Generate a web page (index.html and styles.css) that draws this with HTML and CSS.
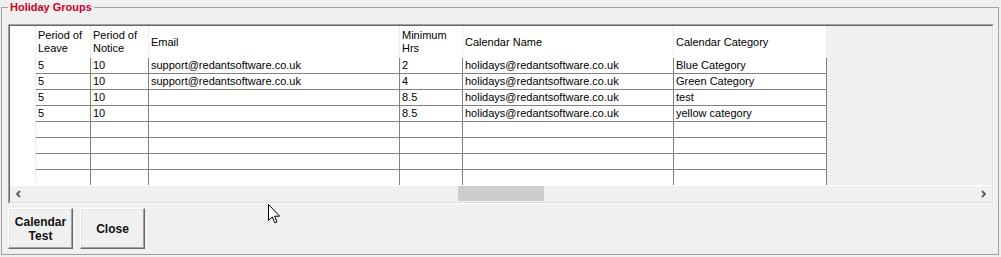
FILE: index.html
```html
<!DOCTYPE html>
<html>
<head>
<meta charset="utf-8">
<link rel="stylesheet" href="styles.css">
</head>
<body>
<fieldset class="group">
  <legend class="group-title">Holiday Groups</legend>
  <div class="grid">
    <div class="grid-inner">
      <div class="viewport">
        <div class="row hdr">
          <div class="rh"></div>
          <div class="c c1">Period of Leave</div>
          <div class="c c2">Period of Notice</div>
          <div class="c c3">Email</div>
          <div class="c c4">Minimum Hrs</div>
          <div class="c c5">Calendar Name</div>
          <div class="c c6">Calendar Category</div>
        </div>
        <div class="row">
          <div class="rh"></div>
          <div class="c c1">5</div><div class="c c2">10</div><div class="c c3">support@redantsoftware.co.uk</div><div class="c c4">2</div><div class="c c5">holidays@redantsoftware.co.uk</div><div class="c c6">Blue Category</div>
        </div>
        <div class="row">
          <div class="rh"></div>
          <div class="c c1">5</div><div class="c c2">10</div><div class="c c3">support@redantsoftware.co.uk</div><div class="c c4">4</div><div class="c c5">holidays@redantsoftware.co.uk</div><div class="c c6">Green Category</div>
        </div>
        <div class="row">
          <div class="rh"></div>
          <div class="c c1">5</div><div class="c c2">10</div><div class="c c3"></div><div class="c c4">8.5</div><div class="c c5">holidays@redantsoftware.co.uk</div><div class="c c6">test</div>
        </div>
        <div class="row">
          <div class="rh"></div>
          <div class="c c1">5</div><div class="c c2">10</div><div class="c c3"></div><div class="c c4">8.5</div><div class="c c5">holidays@redantsoftware.co.uk</div><div class="c c6">yellow category</div>
        </div>
        <div class="row">
          <div class="rh"></div>
          <div class="c c1"></div><div class="c c2"></div><div class="c c3"></div><div class="c c4"></div><div class="c c5"></div><div class="c c6"></div>
        </div>
        <div class="row">
          <div class="rh"></div>
          <div class="c c1"></div><div class="c c2"></div><div class="c c3"></div><div class="c c4"></div><div class="c c5"></div><div class="c c6"></div>
        </div>
        <div class="row">
          <div class="rh"></div>
          <div class="c c1"></div><div class="c c2"></div><div class="c c3"></div><div class="c c4"></div><div class="c c5"></div><div class="c c6"></div>
        </div>
        <div class="row">
          <div class="rh"></div>
          <div class="c c1"></div><div class="c c2"></div><div class="c c3"></div><div class="c c4"></div><div class="c c5"></div><div class="c c6"></div>
        </div>
      </div>
      <div class="hscroll">
        <div class="sb-btn">
          <svg width="7" height="8" viewBox="0 0 7 8"><polyline points="5,1 2,4 5,7" fill="none" stroke="#5a5a5a" stroke-width="1.8"/></svg>
        </div>
        <div class="sb-track"><div class="sb-thumb"></div></div>
        <div class="sb-btn">
          <svg width="7" height="8" viewBox="0 0 7 8"><polyline points="2,1 5,4 2,7" fill="none" stroke="#5a5a5a" stroke-width="1.8"/></svg>
        </div>
      </div>
    </div>
  </div>
  <div class="actions">
    <button class="btn">Calendar<br>Test</button>
    <button class="btn btn-close">Close</button>
  </div>
</fieldset>
<svg class="cursor" width="13" height="21" viewBox="0 0 13 21"><path d="M0.5 0.5 L0.5 16.5 L4.3 12.9 L6.8 18.8 L9 17.9 L6.6 12.2 L11.6 12.2 Z" fill="#fff" stroke="#000" stroke-width="1" stroke-linejoin="miter"/></svg>
</body>
</html>
```

FILE: styles.css
```css
html, body {
  margin: 0;
  padding: 0;
}
body {
  background: #f0f0f0;
  font-family: "Liberation Sans", Arial, sans-serif;
  width: 1001px;
  height: 257px;
  overflow: hidden;
  position: relative;
}
.group {
  margin: 0 0 0 1px;
  padding: 9px 0 0 6px;
  border: 1px solid #a0a0a0;
  width: 998px;
  height: 255px;
  box-sizing: border-box;
  min-width: 0;
}
.group-title {
  margin-left: 0;
  padding: 0 2px;
  font-weight: bold;
  font-size: 11px;
  line-height: 15px;
  color: #cc0022;
}
.grid {
  width: 986px;
  box-sizing: border-box;
  border: 1px solid;
  border-color: #a0a0a0 #ffffff #ffffff #a0a0a0;
}
.grid-inner {
  border: 1px solid;
  border-color: #696969 #dcdcdc #dcdcdc #696969;
  background: #f0f0f0;
}
.viewport {
  height: 159px;
  overflow: hidden;
}
.row {
  display: flex;
  height: 16px;
  font-size: 11px;
  line-height: 15px;
  color: #000;
}
.rh {
  width: 25px;
  flex: none;
  background: #fff;
  border-right: 1px dotted #e2e2e2;
}
.c {
  flex: none;
  box-sizing: border-box;
  background: #fff;
  padding-left: 2px;
  border-right: 1px solid #828282;
  border-bottom: 1px solid #828282;
  white-space: nowrap;
  overflow: hidden;
}
.c1 { width: 55px; }
.c2 { width: 58px; }
.c3 { width: 251px; }
.c4 { width: 63px; }
.c5 { width: 211px; }
.c6 { width: 153px; }
.hdr {
  height: 32px;
  line-height: 13px;
}
.hdr .c {
  border-bottom: none;
  border-right: 1px dotted #dedede;
  white-space: normal;
  display: flex;
  align-items: center;
  padding-right: 1px;
}
.hscroll {
  display: flex;
  height: 17px;
  box-sizing: border-box;
  border-top: 1px solid #ffffff;
}
.sb-btn {
  width: 17px;
  flex: none;
  display: flex;
  align-items: center;
  justify-content: center;
  padding-bottom: 1px;
  box-sizing: border-box;
}
.sb-track {
  flex: 1;
  padding-left: 431px;
}
.sb-thumb {
  width: 86px;
  height: 15px;
  background: #cdcdcd;
}
.actions {
  display: flex;
  gap: 7px;
  margin-top: 4px;
}
.btn {
  width: 65px;
  height: 41px;
  box-sizing: border-box;
  margin: 0;
  padding: 0;
  border: 1px solid;
  border-color: #ffffff #696969 #696969 #ffffff;
  box-shadow: inset -1px -1px #a0a0a0, inset 1px 1px #e3e3e3;
  background: #f0f0f0;
  font-family: "Liberation Sans", Arial, sans-serif;
  font-weight: bold;
  font-size: 12px;
  line-height: 14px;
  color: #111;
  text-align: center;
}
.cursor {
  position: absolute;
  left: 268px;
  top: 204px;
}
```
